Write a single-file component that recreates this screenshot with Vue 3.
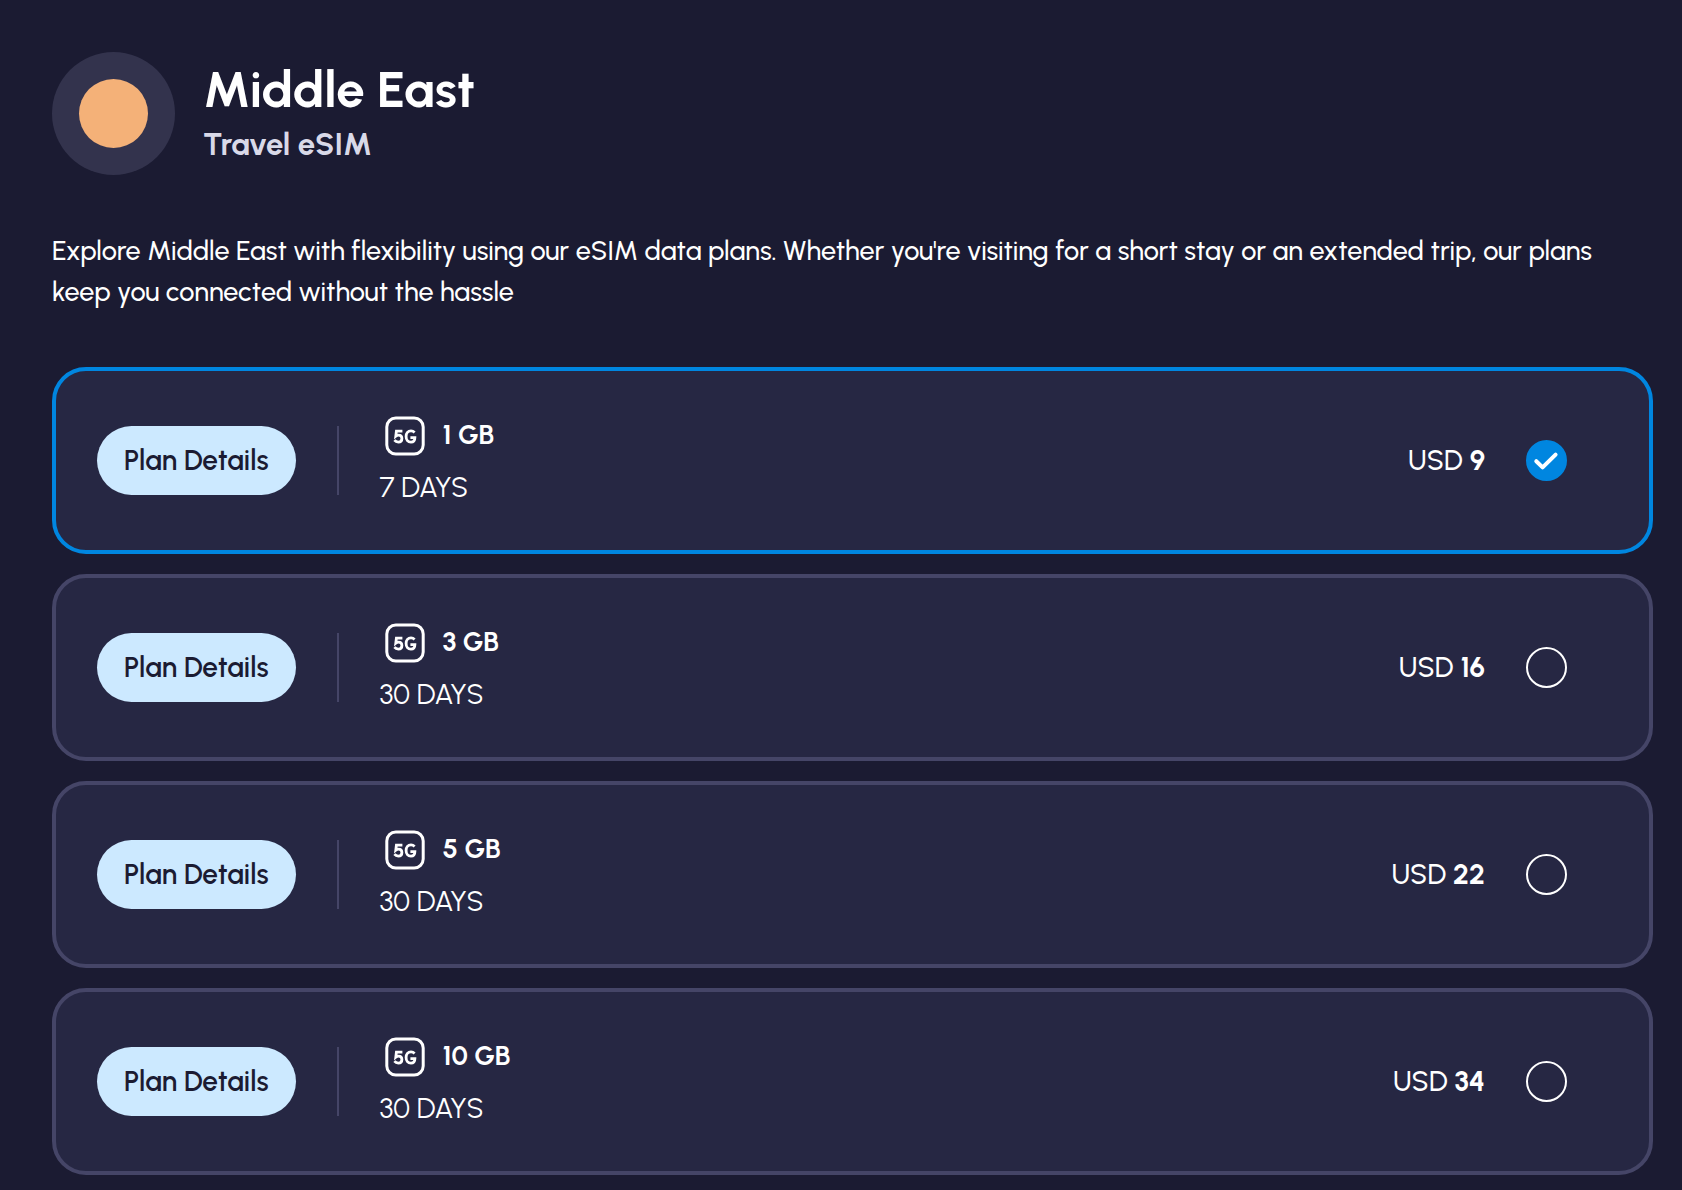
<script setup>
import { ref } from 'vue'

const selected = ref(1)
const plans = [
  { id: 1, data: '1 GB', days: '7 DAYS', price: 9 },
  { id: 3, data: '3 GB', days: '30 DAYS', price: 16 },
  { id: 5, data: '5 GB', days: '30 DAYS', price: 22 },
  { id: 10, data: '10 GB', days: '30 DAYS', price: 34 },
]
</script>

<template>
  <main class="page">
    <header class="header">
      <div class="badge"><span class="badge-dot"></span></div>
      <div>
        <h1 class="title">Middle East</h1>
        <p class="subtitle">Travel eSIM</p>
      </div>
    </header>

    <p class="intro">
      Explore Middle East with flexibility using our eSIM data plans. Whether you're visiting for a
      short stay or an extended trip, our plans keep you connected without the hassle
    </p>

    <div class="plans" role="radiogroup" aria-label="Data plans">
      <section v-for="plan in plans" :key="plan.id" class="card" :class="{ active: selected === plan.id }">
        <button type="button" class="details">Plan Details</button>
        <span class="divider"></span>
        <label class="choice" :for="'plan-' + plan.id">
          <span class="info">
            <span class="data">
              <svg class="network" viewBox="0 0 50 50" aria-hidden="true">
                <rect x="6.8" y="7" width="36.4" height="36" rx="9" fill="none" stroke="#fff" stroke-width="3" />
                <g fill="none" stroke="#fff" stroke-width="2.8">
                  <path d="M22.4 20.1H16.4L15.8 25.2C16.8 24.4 17.7 24.2 18.6 24.2C20.6 24.2 21.9 25.6 21.9 27.5C21.9 29.7 20.4 31.1 18.3 31.1C16.7 31.1 15.4 30.4 14.4 29.2" />
                  <path d="M34.6 21.4C33.6 20.4 32.3 19.9 31 19.9C28 19.9 26.1 22.3 26.1 25.5C26.1 28.9 28 31.2 30.9 31.2C33.6 31.2 34.9 29.4 34.9 26.6H30.4" />
                </g>
              </svg>
              <strong class="amount">{{ plan.data }}</strong>
            </span>
            <span class="days">{{ plan.days }}</span>
          </span>
          <span class="price">USD <strong>{{ plan.price }}</strong></span>
        </label>
        <span class="radio">
          <input :id="'plan-' + plan.id" v-model="selected" type="radio" name="plan" :value="plan.id" />
          <svg v-if="selected === plan.id" viewBox="0 0 41 41" aria-hidden="true">
            <path d="M10.3 21.2L16.6 27.4L29.6 14.6" fill="none" stroke="#fff" stroke-width="4" stroke-linecap="round" stroke-linejoin="round" />
          </svg>
        </span>
      </section>
    </div>
  </main>
</template>

<style>
body {
  margin: 0;
  background: #1b1b32;
}
</style>

<style scoped>
.page {
  padding: 52px 29px 16px 52px;
  color: #fff;
  font-family: Urbanist, Lato, sans-serif;
  font-size: 27px;
  font-weight: 500;
  line-height: 41px;
}
.header {
  display: flex;
  align-items: center;
  gap: 28px;
}
.badge {
  display: grid;
  place-items: center;
  width: 123px;
  height: 123px;
  border-radius: 50%;
  background: #33334d;
}
.badge-dot {
  width: 69px;
  height: 69px;
  border-radius: 50%;
  background: #f4b178;
}
.title {
  margin: 0;
  font-size: 51px;
  font-weight: 700;
  line-height: 62px;
}
.subtitle {
  margin: 0;
  color: #d9d9e8;
  font-size: 31px;
  font-weight: 700;
  line-height: 48px;
}
.intro {
  margin: 55px 0;
}
.plans {
  display: flex;
  flex-direction: column;
  gap: 20px;
}
.card {
  display: flex;
  align-items: center;
  gap: 41px;
  padding: 36px 82px 37px 41px;
  border: 4px solid #454567;
  border-radius: 34px;
  background: #262743;
}
.card.active {
  border-color: #0086e0;
}
.details {
  padding: 14px 27px;
  border: 0;
  border-radius: 35px;
  background: #cce9ff;
  color: #1b1b32;
  font: inherit;
  font-size: 28px;
  font-weight: 600;
  white-space: nowrap;
  cursor: pointer;
}
.divider {
  width: 2px;
  height: 69px;
  background: #454567;
}
.choice {
  display: flex;
  flex: 1;
  align-items: center;
  justify-content: space-between;
  cursor: pointer;
}
.info {
  display: flex;
  flex-direction: column;
  padding-top: 2px;
}
.data {
  display: flex;
  align-items: center;
  gap: 13px;
  height: 53px;
}
.network {
  width: 50px;
  height: 50px;
}
.amount {
  padding-bottom: 3px;
}
.days {
  font-size: 28px;
  font-weight: 400;
  line-height: 51px;
}
.price {
  padding-top: 1px;
  font-size: 28px;
}
.radio {
  display: grid;
}
.radio input,
.radio svg {
  grid-area: 1 / 1;
  box-sizing: border-box;
  width: 41px;
  height: 41px;
  margin: 0;
}
.radio input {
  appearance: none;
  border: 2px solid #fff;
  border-radius: 50%;
  cursor: pointer;
}
.radio input:checked {
  border-color: #0086e0;
  background: #0086e0;
}
.radio svg {
  pointer-events: none;
}
</style>
